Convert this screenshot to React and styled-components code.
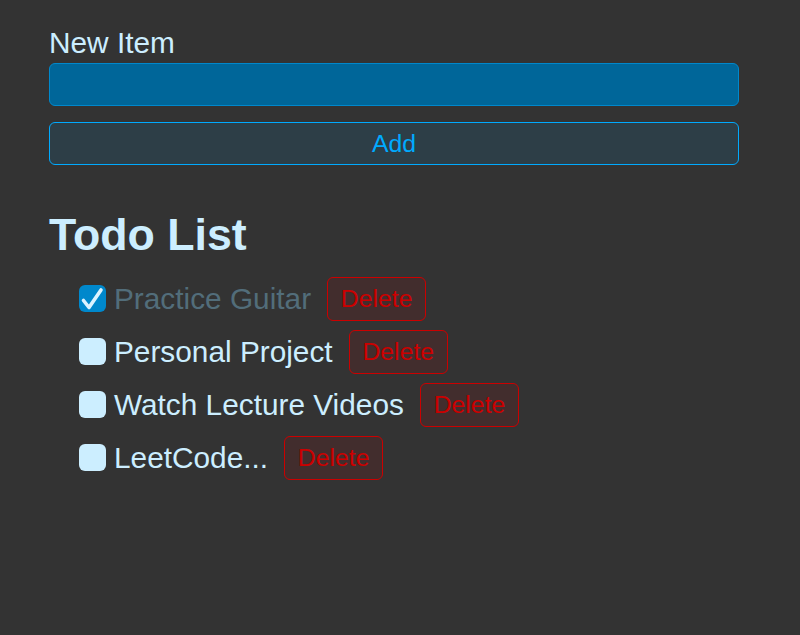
import React, { useState } from 'react';
import styled, { createGlobalStyle } from 'styled-components';

const GlobalStyle = createGlobalStyle`
  *, *::before, *::after { box-sizing: border-box; }
  html, body { margin: 0; padding: 0; }
  body {
    background: #333333;
    color: hsl(200, 100%, 90%);
    font-family: "Liberation Sans", Arial, sans-serif;
    font-size: 29.8px;
  }
`

const Page = styled.div`
  width: 690px;
  margin-left: 49px;
  padding-top: 26px;
`

const Form = styled.form`
  display: flex;
  flex-direction: column;
  gap: 16px;
`

const FormRow = styled.div`
  display: flex;
  flex-direction: column;
  gap: 3px;
`

const Label = styled.label`
  font-size: 29.8px;
  line-height: 34px;
`

const Input = styled.input`
  height: 43px;
  outline: none;
  border: 1.5px solid hsl(200, 100%, 40%);
  background: hsl(200, 100%, 30%);
  border-radius: 6px;
  padding: 0 12px;
  color: hsl(200, 100%, 90%);
  font-family: inherit;
  font-size: 24.8px;
`

const Button = styled.button`
  height: ${p => (p.$danger ? '44px' : '43px')};
  padding: 0 12.8px;
  border-radius: 6px;
  font-family: "Liberation Sans", Arial, sans-serif;
  font-size: 24.8px;
  cursor: pointer;
  background: ${p => (p.$danger ? 'hsla(0, 100%, 40%, 0.1)' : 'hsla(200, 100%, 50%, 0.1)')};
  border: 1.5px solid ${p => (p.$danger ? 'hsl(0, 100%, 40%)' : 'hsl(200, 100%, 50%)')};
  color: ${p => (p.$danger ? 'hsl(0, 100%, 40%)' : 'hsl(200, 100%, 50%)')};
`

const Header = styled.h1`
  font-size: 44.7px;
  font-weight: bold;
  line-height: 50.5px;
  margin: 45px 0 16px;
`

const List = styled.ul`
  list-style: none;
  margin: 0 0 0 30px;
  padding: 0;
  display: flex;
  flex-direction: column;
  gap: 9px;
`

const Item = styled.li`
  display: flex;
  align-items: center;
  gap: 16px;
`

const ItemLabel = styled.label`
  display: flex;
  align-items: center;
  gap: 8px;
  cursor: pointer;
  font-size: 29.8px;
  line-height: 34px;
  color: ${p => (p.$done ? 'hsl(200, 20%, 40%)' : 'hsl(200, 100%, 90%)')};
`

const Box = styled.span`
  width: 27px;
  height: 27px;
  border-radius: 6px;
  display: flex;
  align-items: center;
  justify-content: center;
  background: ${p => (p.$checked ? 'hsl(200, 100%, 40%)' : 'hsl(200, 100%, 90%)')};
`

const Check = () => (
  <svg width="27" height="27" viewBox="0 0 27 27">
    <path
      d="M4.5 15.5 L10 22.5 L22 5"
      fill="none"
      stroke="hsl(200, 100%, 93%)"
      strokeWidth="3.6"
      strokeLinecap="round"
      strokeLinejoin="round"
    />
  </svg>
);

const todos = [
  { id: 1, title: 'Practice Guitar', completed: true },
  { id: 2, title: 'Personal Project', completed: false },
  { id: 3, title: 'Watch Lecture Videos', completed: false },
  { id: 4, title: 'LeetCode...', completed: false },
];

export default function App() {
  const [items, setItems] = useState(todos);
  const [newItem, setNewItem] = useState('');

  const toggle = id =>
    setItems(items.map(t => (t.id === id ? { ...t, completed: !t.completed } : t)));

  return (
    <>
      <GlobalStyle />
      <Page>
        <Form onSubmit={e => e.preventDefault()}>
          <FormRow>
            <Label htmlFor="item">New Item</Label>
            <Input id="item" value={newItem} onChange={e => setNewItem(e.target.value)} />
          </FormRow>
          <Button>Add</Button>
        </Form>
        <Header>Todo List</Header>
        <List>
          {items.map(t => (
            <Item key={t.id}>
              <ItemLabel $done={t.completed} onClick={() => toggle(t.id)}>
                <Box $checked={t.completed}>{t.completed && <Check />}</Box>
                {t.title}
              </ItemLabel>
              <Button $danger>Delete</Button>
            </Item>
          ))}
        </List>
      </Page>
    </>
  );
}
